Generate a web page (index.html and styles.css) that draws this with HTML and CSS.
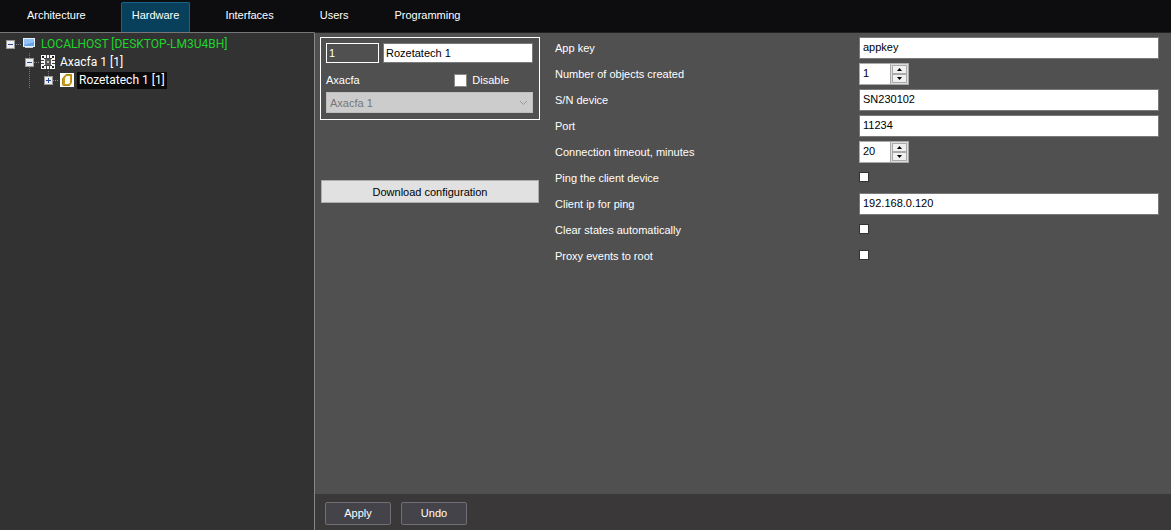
FILE: index.html
```html
<!DOCTYPE html>
<html lang="en">
<head>
<meta charset="utf-8">
<title>Hardware settings</title>
<link rel="stylesheet" href="styles.css">
</head>
<body>
<div class="app">
  <nav class="tabs">
    <button class="tab" type="button">Architecture</button>
    <button class="tab tab-active" type="button">Hardware</button>
    <button class="tab" type="button">Interfaces</button>
    <button class="tab" type="button">Users</button>
    <button class="tab" type="button">Programming</button>
  </nav>
  <div class="workspace">
    <aside class="sidebar">
      <ul class="tree">
        <li>
          <div class="node">
            <button class="toggle" type="button" aria-label="Collapse"><svg width="9" height="9" viewBox="0 0 9 9"><path d="M2 4h5v1H2z" fill="#2b4a9b"/></svg></button>
            <svg class="link" width="7" height="16" viewBox="0 0 7 16"><path d="M1 8.500h6" stroke="#8a8a8a" stroke-dasharray="1 1"/></svg>
            <svg class="icon" width="14" height="16" viewBox="0 0 14 16"><path d="M1 2h12v9H1z" fill="#e8f1fb"/><path d="M2 3h10v7H2z" fill="#67a5e8"/><path d="M2 3h10v3L2 9z" fill="#94c4f5"/><path d="M3 11h8v1H3z" fill="#c4d0dc"/></svg>
            <span class="label label-host">LOCALHOST [DESKTOP-LM3U4BH]</span>
          </div>
          <ul class="branch">
            <li>
              <div class="node">
                <button class="toggle" type="button" aria-label="Collapse"><svg width="9" height="9" viewBox="0 0 9 9"><path d="M2 4h5v1H2z" fill="#2b4a9b"/></svg></button>
                <svg class="link" width="6" height="16" viewBox="0 0 6 16"><path d="M0 8.500h6" stroke="#8a8a8a" stroke-dasharray="1 1"/></svg>
                <svg class="icon" width="15" height="16" viewBox="0 0 15 16"><path d="M1 1h14v14H1z" fill="#f6f6f6"/><path d="M2 2h2v2H2zM12 2h2v2h-2zM2 12h2v2H2zM12 12h2v2h-2z" fill="#252525"/><path d="M4 4.500h8M4 11.500h8M1 6.500h3M12 6.500h3M1 9.500h3M12 9.500h3M6.500 1v3M9.500 1v3M6.500 12v3M9.500 12v3" stroke="#444"/><path d="M5 5h6v6H5z" fill="#666"/><circle cx="8" cy="8" r="2" fill="#bbb" stroke="#333"/></svg>
                <span class="label">Axacfa 1 [1]</span>
              </div>
              <ul class="branch">
                <li>
                  <div class="node">
                    <button class="toggle" type="button" aria-label="Expand"><svg width="9" height="9" viewBox="0 0 9 9"><path d="M2 4h5v1H2zM4 2h1v5H4z" fill="#2b4a9b"/></svg></button>
                    <svg class="link" width="6" height="16" viewBox="0 0 6 16"><path d="M0 8.500h6" stroke="#8a8a8a" stroke-dasharray="1 1"/></svg>
                    <svg class="icon" width="15" height="16" viewBox="0 0 15 16"><path d="M1 1h14v14H1z" fill="#fff"/><path d="M7 2.500h5.500v8l-2 3H4l-.500-1V6.500z" fill="#c69a1c" stroke="#b08614" stroke-linejoin="round"/><path d="M7.500 4H11v6.500L9.500 12H6V6z" fill="#fffdf0"/></svg>
                    <span class="label label-selected">Rozetatech 1 [1]</span>
                  </div>
                </li>
              </ul>
            </li>
          </ul>
        </li>
      </ul>
    </aside>
    <main class="panel">
      <div class="content">
        <section class="device">
          <div class="identity">
            <input class="field field-id" type="text" value="1" readonly aria-label="Object number">
            <input class="field field-name" type="text" value="Rozetatech 1" aria-label="Object name">
            <label class="parent-label" for="parent">Axacfa</label>
            <label class="disable"><input class="check check-large" type="checkbox">Disable</label>
            <div class="parent">
              <select class="parent-select" id="parent" disabled><option>Axacfa 1</option></select>
              <svg class="chevron" width="9" height="6" viewBox="0 0 9 6"><path d="M1 1l3.500 3.500L8 1" fill="none" stroke="#999"/></svg>
            </div>
          </div>
          <button class="download" type="button">Download configuration</button>
        </section>
        <form class="settings">
          <label for="appkey">App key</label>
          <input class="field" id="appkey" type="text" value="appkey">
          <label for="objects">Number of objects created</label>
          <div class="spinner"><input class="count" id="objects" type="text" inputmode="numeric" value="1"><div class="steps"><button class="step" type="button" aria-label="Increase objects"><svg width="5" height="3" viewBox="0 0 5 3"><path d="M0 3 2.500 0 5 3z"/></svg></button><button class="step" type="button" aria-label="Decrease objects"><svg width="5" height="3" viewBox="0 0 5 3"><path d="M0 0h5L2.500 3z"/></svg></button></div></div>
          <label for="serial">S/N device</label>
          <input class="field" id="serial" type="text" value="SN230102">
          <label for="port">Port</label>
          <input class="field" id="port" type="text" value="11234">
          <label for="timeout">Connection timeout, minutes</label>
          <div class="spinner"><input class="count" id="timeout" type="text" inputmode="numeric" value="20"><div class="steps"><button class="step" type="button" aria-label="Increase timeout"><svg width="5" height="3" viewBox="0 0 5 3"><path d="M0 3 2.500 0 5 3z"/></svg></button><button class="step" type="button" aria-label="Decrease timeout"><svg width="5" height="3" viewBox="0 0 5 3"><path d="M0 0h5L2.500 3z"/></svg></button></div></div>
          <label for="ping">Ping the client device</label>
          <input class="check" id="ping" type="checkbox">
          <label for="client-ip">Client ip for ping</label>
          <input class="field" id="client-ip" type="text" value="192.168.0.120">
          <label for="clear">Clear states automatically</label>
          <input class="check" id="clear" type="checkbox">
          <label for="proxy">Proxy events to root</label>
          <input class="check" id="proxy" type="checkbox">
        </form>
      </div>
      <footer class="actions">
        <button class="action" type="button">Apply</button>
        <button class="action" type="button">Undo</button>
      </footer>
    </main>
  </div>
</div>
</body>
</html>
```
FILE: styles.css
```css
* { box-sizing: border-box; }
body {
  margin: 0;
  background: #323232;
  color: #fff;
  font: 11px/14px "Liberation Sans", Arial, sans-serif;
}
button, input, select { font: inherit; color: inherit; margin: 0; }
.app { display: flex; flex-direction: column; min-height: 100vh; }
.tabs {
  display: flex;
  gap: 24px;
  height: 32px;
  padding: 2px 16px 0;
  background: #0d0d0f;
}
.tab {
  padding: 0 10px 6px;
  border: 1px solid transparent;
  border-bottom: 0;
  border-radius: 2px 2px 0 0;
  background: none;
}
.tab-active { background: #08405c; border-color: #17668a; }
.workspace { display: flex; flex: 1; }
.sidebar {
  flex: none;
  width: 314px;
  padding: 2px 6px;
  border-top: 1px solid #74767a;
  background: #323232;
}
.tree, .branch { list-style: none; margin: 0; padding: 0; }
.branch {
  margin-left: 4px;
  padding-left: 15px;
  background: repeating-linear-gradient(#777 0 1px, transparent 1px 2px) 19px 0 / 1px 100% no-repeat;
}
.branch .branch { background-size: 1px 9px; }
.node { display: flex; align-items: center; height: 18px; }
.toggle {
  display: flex;
  width: 9px;
  height: 9px;
  padding: 0;
  border: 0;
  outline: 1px solid #999;
  outline-offset: -1px;
  background: #eee;
}
.icon { margin-right: 3px; }
.label {
  padding: 0 2px;
  font: 12px/17px Roboto, "Noto Sans", sans-serif;
  white-space: nowrap;
}
.label-host { color: #1fd42c; }
.label-selected { background: #0a0a0a; }
.panel {
  display: flex;
  flex: 1;
  flex-direction: column;
  min-width: 0;
  border-left: 1px solid #85878b;
  border-top: 1px solid #222;
  background: #505050;
}
.content { display: flex; flex: 1; gap: 15px; padding: 4px 12px 12px 5px; }
.device { flex: none; width: 220px; }
.identity {
  display: grid;
  grid-template-columns: 53px 1fr;
  gap: 4px;
  padding: 5px 6px 6px 5px;
  border: 1px solid #fff;
}
.field {
  width: 100%;
  height: 22px;
  padding: 0 3px 2px;
  border: 1px solid #7a7a7a;
  border-radius: 0;
  background: #fff;
  color: #000;
}
.identity .field { height: 20px; padding: 0 2px; }
.identity .field-id { border: 1px solid #fff; background: #505050; color: #fff; }
.parent-label { padding: 6px 0 1px; }
.disable {
  display: flex;
  align-items: center;
  justify-self: end;
  gap: 5px;
  padding: 6px 24px 1px 0;
}
.check {
  appearance: none;
  width: 10px;
  height: 10px;
  border: 1px solid #333;
  background: #fff;
}
.settings .check { margin-bottom: 2px; }
.check:checked { background: #08405c; }
.check-large { width: 13px; height: 13px; border-color: #888; }
.parent { display: grid; grid-column: 1 / -1; align-items: center; }
.parent > * { grid-area: 1 / 1; }
.parent-select {
  appearance: none;
  width: 100%;
  height: 21px;
  padding: 0 3px;
  border: 1px solid #bfbfbf;
  border-radius: 0;
  background: #ccc;
  color: #777;
  opacity: 1;
}
.chevron { justify-self: end; margin-right: 5px; pointer-events: none; }
.download {
  display: block;
  width: calc(100% - 2px);
  height: 23px;
  margin: 60px 1px 0;
  border: 1px solid #adadad;
  background: #e1e1e1;
  color: #000;
}
.settings {
  display: grid;
  grid-template-columns: 304px minmax(0, 1fr);
  grid-auto-rows: 22px;
  align-content: start;
  align-items: center;
  flex: 1;
  row-gap: 4px;
}
.spinner {
  display: flex;
  width: 50px;
  height: 22px;
  border: 1px solid #aaa;
  background: #fff;
}
.count {
  flex: 1;
  min-width: 0;
  padding: 0 3px 2px;
  border: 0;
  background: #fff;
  color: #000;
}
.steps { display: grid; width: 18px; padding: 1px; background: #ddd; border-left: 1px solid #aaa; }
.step {
  display: grid;
  place-items: center;
  padding: 0;
  border: 1px solid #aaa;
  background: #f0f0f0;
}
.actions {
  display: flex;
  gap: 10px;
  padding: 8px 10px 5px;
  background: #3a3838;
}
.action {
  width: 66px;
  height: 23px;
  padding: 0 6px 2px;
  border: 1px solid #707074;
  border-radius: 2px;
  background: #444349;
}
```
